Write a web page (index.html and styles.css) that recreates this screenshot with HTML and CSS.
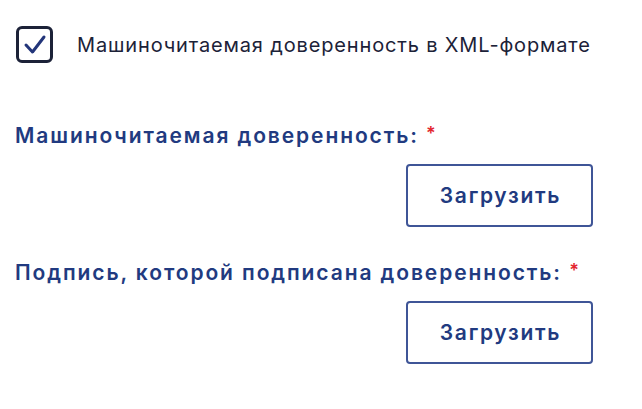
FILE: index.html
```html
<!DOCTYPE html>
<html lang="ru">
<head>
  <meta charset="UTF-8" />
  <title>Доверенность</title>
  <link rel="stylesheet" href="styles.css">
</head>
<body>
  <div class="form">

    <!-- XML checkbox -->
    <label class="check-row">
      <span class="check-box">
        <svg width="24" height="22" viewBox="0 0 24 22">
          <path d="M3 11 L9.5 18 L21 3" fill="none" stroke="#23357a" stroke-width="3" stroke-linecap="round" stroke-linejoin="round"/>
        </svg>
      </span>
      <span class="check-text">Машиночитаемая доверенность в XML-формате</span>
    </label>

    <div class="field">
      <div class="field-label">Машиночитаемая доверенность: <span class="req">*</span></div>
      <div class="field-action">
        <button class="upload-btn">Загрузить</button>
      </div>
    </div>

    <div class="field">
      <div class="field-label">Подпись, которой подписана доверенность: <span class="req">*</span></div>
      <div class="field-action">
        <button class="upload-btn">Загрузить</button>
      </div>
    </div>

  </div>
</body>
</html>
```

FILE: styles.css
```css
:root {
  --navy: #213a80;
  --dark: #1c2238;
  --red: #e3262e;
}

body {
  margin: 0;
  background: #fff;
  font-family: Inter, "Noto Sans", Arial, sans-serif;
}

.form {
  width: 578px;
  padding: 26px 0 0 15px;
  display: flex;
  flex-direction: column;
}

.check-row {
  display: flex;
  align-items: center;
  gap: 24px;
  padding-left: 1px;
}

.check-box {
  width: 31px;
  height: 31px;
  border: 3px solid var(--dark);
  border-radius: 6px;
  display: flex;
  align-items: center;
  justify-content: center;
}

.check-text {
  font-size: 20px;
  letter-spacing: 0.85px;
  color: var(--dark);
}

.field {
  margin-top: 60px;
}

.field + .field {
  margin-top: 33px;
}

.field-label {
  font-size: 21px;
  font-weight: 600;
  letter-spacing: 1.9px;
  color: var(--navy);
}

.req {
  color: var(--red);
  font-size: 18px;
  vertical-align: top;
  letter-spacing: 0;
}

.field-action {
  display: flex;
  justify-content: flex-end;
  margin-top: 16px;
}

.upload-btn {
  width: 187px;
  height: 63px;
  background: #fff;
  border: 2px solid #3f5597;
  border-radius: 4px;
  font-family: inherit;
  font-size: 21px;
  font-weight: 600;
  letter-spacing: 1.7px;
  padding: 0 0 0 2px;
  color: var(--navy);
}
```
